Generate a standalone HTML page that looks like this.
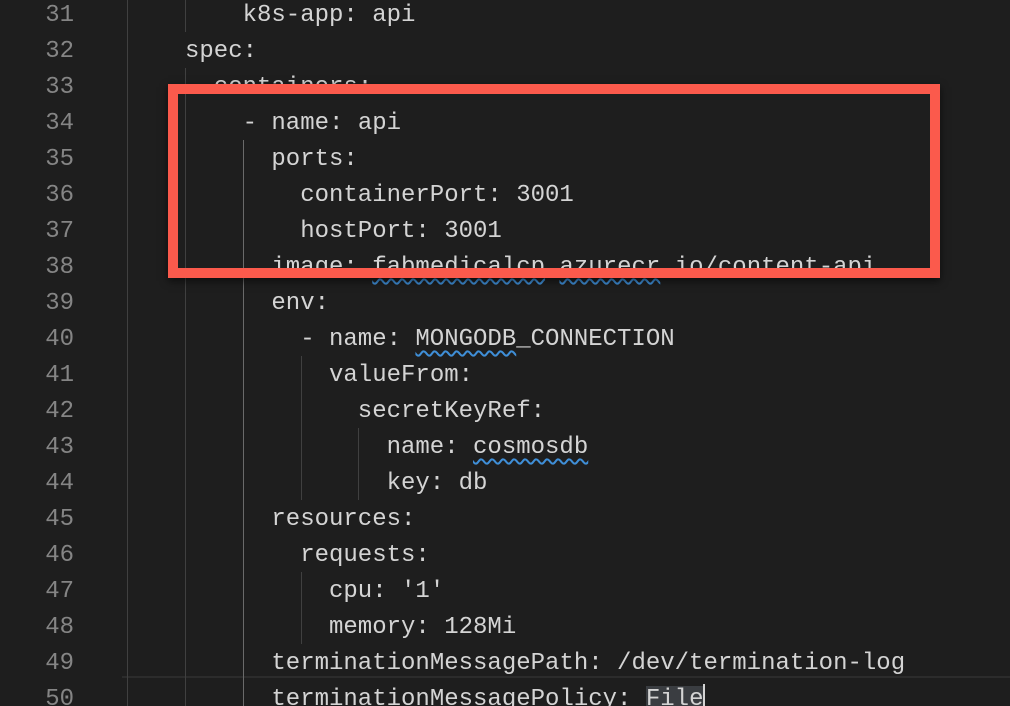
<!DOCTYPE html>
<html><head><meta charset="utf-8"><style>
html,body{margin:0;padding:0;background:#1e1e1e;width:1010px;height:706px;overflow:hidden;position:relative}
.n{position:absolute;left:0;width:74px;text-align:right;color:#858585;font:24px "Liberation Mono",monospace;line-height:36px;height:36px}
.t{position:absolute;color:#d4d4d4;font:24px "Liberation Mono",monospace;line-height:36px;height:36px;white-space:pre}
.g{position:absolute;width:1px;background:#404040}
.sq{text-decoration:underline wavy #3f8fd8;text-decoration-thickness:1.5px;text-underline-offset:5px}
.box{position:absolute;left:168px;top:84px;width:752px;height:174px;border:10px solid #fb5a4c;box-shadow:0 3px 8px rgba(0,0,0,.6)}
</style></head><body>
<div style="position:absolute;left:122px;top:676px;width:888px;height:34px;border-top:2px solid #2c2c2c"></div>
<div class="g" style="left:127px;top:0;height:706px"></div>
<div class="g" style="left:185px;top:0;height:32px"></div>
<div class="g" style="left:185px;top:68px;height:638px"></div>
<div class="g" style="left:243px;top:140px;height:566px;background:#6a6a6a"></div>
<div class="g" style="left:301px;top:356px;height:144px"></div>
<div class="g" style="left:358px;top:428px;height:72px"></div>
<div class="g" style="left:301px;top:572px;height:72px"></div>
<script>
var L=[[31,8,"k8s-app: api"],[32,4,"spec:"],[33,6,"containers:"],[34,8,"- name: api"],[35,10,"ports:"],[36,12,"containerPort: 3001"],[37,12,"hostPort: 3001"],[38,10,'image: <span class="sq">fabmedicalcp</span>.<span class="sq">azurecr</span>.io/content-api'],[39,10,"env:"],[40,12,'- name: <span class="sq">MONGODB</span>_CONNECTION'],[41,14,"valueFrom:"],[42,16,"secretKeyRef:"],[43,18,'name: <span class="sq">cosmosdb</span>'],[44,18,"key: db"],[45,10,"resources:"],[46,12,"requests:"],[47,14,"cpu: '1'"],[48,14,"memory: 128Mi"],[49,10,"terminationMessagePath: /dev/termination-log"],[50,10,'terminationMessagePolicy: <span style="background:#3a3d41">File</span><span style="display:inline-block;width:2px;height:30px;background:#d4d4d4;vertical-align:middle"></span>']];
var h="";L.forEach(function(l){var top=(l[0]-31)*36-2;h+='<div class="n" style="top:'+top+'px">'+l[0]+'</div><div class="t" style="top:'+top+'px;left:'+(127.4+l[1]*14.4)+'px">'+l[2]+'</div>';});
document.write(h);
</script>
<div class="box"></div>
</body></html>
